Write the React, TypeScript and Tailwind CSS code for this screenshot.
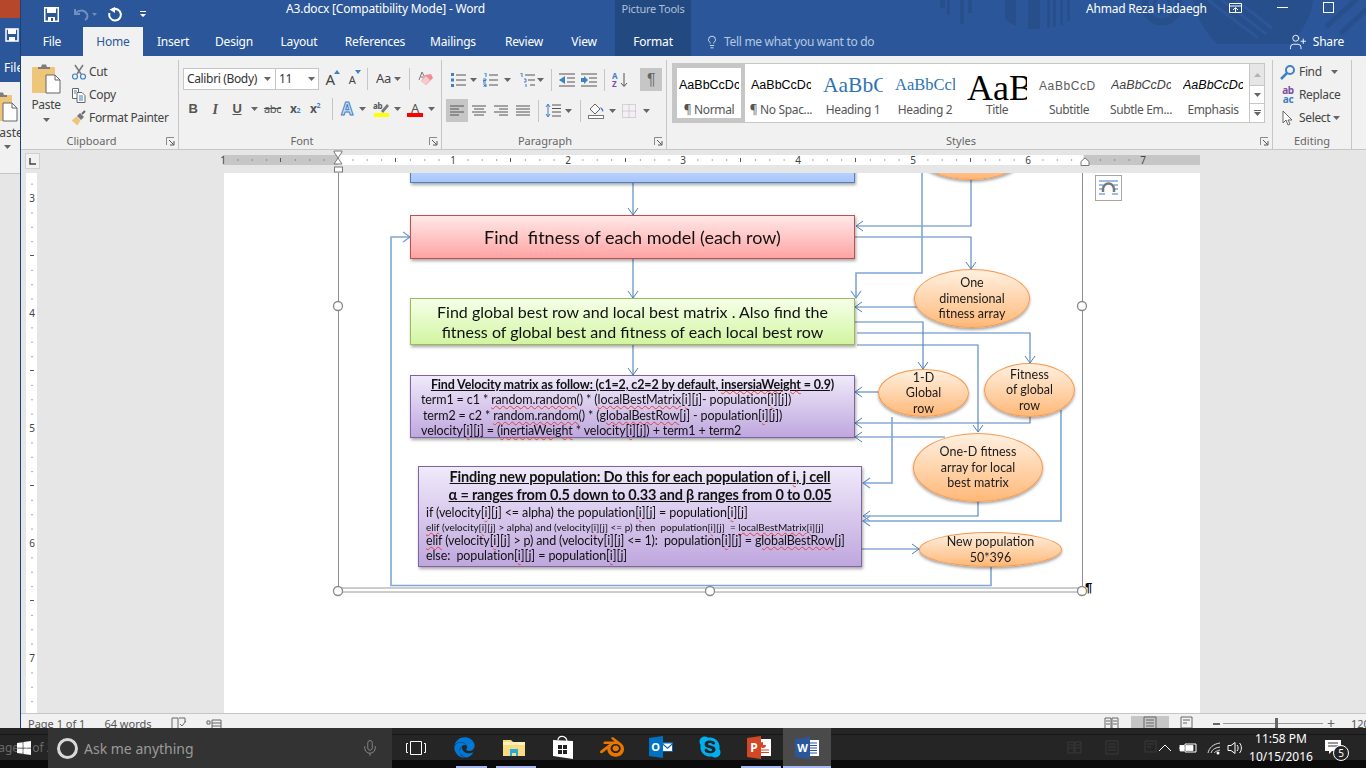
import React from "react";
import { FaEdge, FaWindows, FaSkype } from "react-icons/fa";
import { SiBlender } from "react-icons/si";
import { Lightbulb, UserPlus, Mic } from "lucide-react";

const LB = "#3f7fc4";

function Caret({ className = "" }: { className?: string }) {
  return (
    <svg width="7" height="4" viewBox="0 0 7 4" className={className}>
      <path d="M0 0h7L3.500 4z" fill="#666" />
    </svg>
  );
}

function Cell({ className, children }: { className: string; children?: React.ReactNode }) {
  return <span className={"flex items-center justify-center shrink-0 h-full " + className}>{children}</span>;
}

function Sep({ className = "" }: { className?: string }) {
  return <span className={"block w-px h-[22px] bg-[#c6c6c6] shrink-0 " + className} />;
}

function Launcher() {
  return (
    <svg width="9" height="9" viewBox="0 0 9 9" className="absolute right-[3px] bottom-[3px]">
      <path d="M0.500 8V0.500H8" fill="none" stroke="#8a8a8a" />
      <path d="M3 3l4.500 4.500M8 4v4H4" fill="none" stroke="#555" />
    </svg>
  );
}

function Group({ label, className, labelClass = "pr-[15px]", launcher = true, children }: { label: string; className: string; labelClass?: string; launcher?: boolean; children: React.ReactNode }) {
  return (
    <div className={"relative shrink-0 h-[89px] my-[4px] border-r border-[#c6c6c6] flex flex-col " + className}>
      <div className="h-[73px] shrink-0">{children}</div>
      <div className={"flex-1 flex items-center justify-center text-[11px] tracking-normal leading-none text-[#666] pb-[1px] " + labelClass}>{label}</div>
      {launcher && <Launcher />}
    </div>
  );
}

function Lines({ d }: { d: string }) {
  return (
    <svg width="16" height="14" viewBox="0 0 16 14">
      <path d={d} stroke="#555" fill="none" />
    </svg>
  );
}

function Paste() {
  return (
    <svg width="30" height="30" viewBox="0 0 30 30">
      <rect x="1" y="3" width="23" height="26" rx="1" fill="#eec67a" />
      <path d="M7 5V3h3l1-2.500h4l1 2.500h3v2z" fill="#7d7d7d" />
      <path d="M15 11h9l5 5v13H15z" fill="#fff" stroke="#666" />
      <path d="M24 11v5h5" fill="none" stroke="#666" />
    </svg>
  );
}

function Ribbon() {
  return (
    <div className="h-[94px] shrink-0 bg-[#f1f1f1] border-b border-[#c6c6c6] flex text-[#444] text-[12px] tracking-[-0.35px]">
      <Group label="Clipboard" className="w-[158px]" labelClass="pr-[16px]">
        <div className="flex pl-[5px] h-full">
          <div className="w-[40px] flex flex-col items-center pt-[4px]">
            <Paste />
            <span className="mt-[3px] leading-[16px]">Paste</span>
            <Caret className="mt-[5px]" />
          </div>
          <div className="ml-[5px] flex flex-col">
            <div className="flex items-center h-[23px]">
              <svg width="16" height="16" viewBox="0 0 16 16" className="mr-[2px]">
                <path d="M4 1l6 9M12 1L6 10" stroke="#777" strokeWidth="1.500" fill="none" />
                <circle cx="4" cy="12.500" r="2.500" fill="none" stroke="#3f7fc4" strokeWidth="1.200" />
                <circle cx="12" cy="12.500" r="2.500" fill="none" stroke="#3f7fc4" strokeWidth="1.200" />
              </svg>
              Cut
            </div>
            <div className="flex items-center h-[23px]">
              <svg width="16" height="16" viewBox="0 0 16 16" className="mr-[2px]">
                <path d="M1.500 1.500h6v10h-6z" fill="#fff" stroke="#666" />
                <path d="M6 5.500h5l3 3v7H6z" fill="#fff" stroke="#666" />
                <path d="M8 9h4M8 11h4M8 13h4M3 4h3M3 6h2" stroke="#3f7fc4" />
              </svg>
              Copy
            </div>
            <div className="flex items-center h-[23px] whitespace-nowrap">
              <svg width="16" height="16" viewBox="0 0 16 16" className="mr-[2px]">
                <path d="M9 3l4 4-3 3-4-4z" fill="#777" />
                <path d="M5.500 6.500l4 4-3 5-6-5z" fill="#eec67a" />
                <path d="M11 4l3-3" stroke="#666" strokeWidth="2" />
              </svg>
              Format Painter
            </div>
          </div>
        </div>
      </Group>

      <Group label="Font" className="w-[263px]" labelClass="pr-[16px]">
        <div className="flex h-[22px] mt-[8px] pl-[4px] items-center">
          <div className="w-[93px] shrink-0 h-full bg-white border border-[#c6c6c6] flex items-center justify-between pl-[3px] pr-[4px] text-[#333] whitespace-nowrap">
            Calibri (Body)
            <Caret />
          </div>
          <div className="w-[43px] shrink-0 h-full bg-white border border-l-0 border-[#c6c6c6] flex items-center justify-between px-[3px] text-[#333]">
            11
            <Caret />
          </div>
          <Cell className="w-[22px] text-[15px] leading-none relative">
            A
            <svg width="6" height="4" viewBox="0 0 6 4" className="absolute right-[1px] top-[2px]"><path d="M0 4l3-4 3 4z" fill={LB} /></svg>
          </Cell>
          <Cell className="w-[22px] text-[11px] leading-none relative">
            A
            <svg width="6" height="4" viewBox="0 0 6 4" className="absolute right-[2px] top-[2px]"><path d="M0 0l3 4 3-4z" fill={LB} /></svg>
          </Cell>
          <Sep className="ml-[4px]" />
          <Cell className="w-[41px] text-[13px] gap-[3px]">Aa<Caret /></Cell>
          <Sep />
          <Cell className="w-[31px]">
            <svg width="16" height="16" viewBox="0 0 16 16">
              <path d="M7 4l6-1 2 4-7 7-5-4z" fill="#ef8d96" />
              <path d="M3 10l5-5 4 4-4 5z" fill="#f6c9cd" />
              <path d="M1 9l3-8 2 4M2.500 6h3" fill="none" stroke="#777" />
            </svg>
          </Cell>
        </div>
        <div className="flex h-[22px] mt-[8px] pl-[3px] items-center font-bold text-[#555]">
          <Cell className="w-[22px] [font-family:Liberation_Sans,sans-serif] text-[13px]">B</Cell>
          <Cell className="w-[22px] [font-family:Liberation_Serif,serif] italic text-[14px]">I</Cell>
          <Cell className="w-[22px] underline text-[13px] [font-family:Liberation_Sans,sans-serif]">U</Cell>
          <Cell className="w-[12px]"><Caret /></Cell>
          <Cell className="w-[23px] ml-[1px] font-normal line-through text-[11px]">abc</Cell>
          <Cell className="w-[22px] text-[12px]">x<sub className="text-[7px] text-[#3f7fc4] leading-none">2</sub></Cell>
          <Cell className="w-[18px] text-[12px]">x<sup className="text-[7px] text-[#3f7fc4] leading-none">2</sup></Cell>
          <Sep className="ml-[8px]" />
          <Cell className="w-[22px] ml-[3px] text-[17px] font-bold text-[#cfe2f6] [-webkit-text-stroke:1px_#3f7fc4]">A</Cell>
          <Cell className="w-[8px]"><Caret /></Cell>
          <Cell className="w-[22px] ml-[4px]">
            <svg width="17" height="16" viewBox="0 0 17 16">
              <text x="0" y="8" fontSize="8" fill="#555" fontFamily="Noto Sans">ab</text>
              <path d="M8 10l6-7 2 2-6 7z" fill="#777" />
              <rect x="1" y="12" width="15" height="4" fill="#ffff00" />
            </svg>
          </Cell>
          <Cell className="w-[8px] ml-[1px]"><Caret /></Cell>
          <Cell className="w-[22px] ml-[3px]">
            <svg width="16" height="16" viewBox="0 0 16 16">
              <text x="8" y="11.500" fontSize="13" fontWeight="400" fill="#555" textAnchor="middle" fontFamily="Noto Sans">A</text>
              <rect x="0" y="12" width="16" height="4" fill="#ff0000" />
            </svg>
          </Cell>
          <Cell className="w-[8px] ml-[1px]"><Caret /></Cell>
        </div>
      </Group>

      <Group label="Paragraph" className="w-[225px]" labelClass="pr-[18px]">
        <div className="flex h-[23px] mt-[8px] pl-[6px] items-center">
          <Cell className="w-[21px]">
            <svg width="15" height="14" viewBox="0 0 15 14"><path d="M5 2h10M5 7h10M5 12h10" stroke="#555" /><path d="M0 0h3v3H0zM0 5.500h3v3H0zM0 11h3v3H0z" fill={LB} /></svg>
          </Cell>
          <Cell className="w-[8px]"><Caret /></Cell>
          <Cell className="w-[22px] ml-[2px]">
            <svg width="15" height="14" viewBox="0 0 15 14"><path d="M6 2h9M6 7h9M6 12h9" stroke="#555" /><path d="M1 0h2v4M0 6h3v1.500H0V9h3M0 11h3v3H0M1 12.500h2" stroke={LB} fill="none" /></svg>
          </Cell>
          <Cell className="w-[8px] ml-[2px]"><Caret /></Cell>
          <Cell className="w-[22px] ml-[5px]">
            <svg width="16" height="14" viewBox="0 0 16 14"><path d="M6 2h10M9 7h7M11 12h5" stroke="#555" /><path d="M1 0h2v4M5 6h2v3H5M7 11v3" stroke={LB} fill="none" /></svg>
          </Cell>
          <Cell className="w-[8px] ml-[-2px]"><Caret /></Cell>
          <Sep className="ml-[7px]" />
          <Cell className="w-[22px] ml-[4px]">
            <svg width="16" height="14" viewBox="0 0 16 14"><path d="M0 1h16M8 5h8M8 9h8M0 13h16" stroke="#555" /><path d="M6 3v8L0 7z" fill={LB} /></svg>
          </Cell>
          <Cell className="w-[22px]">
            <svg width="16" height="14" viewBox="0 0 16 14"><path d="M0 1h16M8 5h8M8 9h8M0 13h16" stroke="#555" /><path d="M0 5h3V3l4 4-4 4V9H0z" fill={LB} /></svg>
          </Cell>
          <Sep className="ml-[4px]" />
          <Cell className="w-[22px] ml-[4px]">
            <svg width="16" height="16" viewBox="0 0 16 16">
              <text x="0" y="7" fontSize="8" fontWeight="bold" fill={LB} fontFamily="Noto Sans">A</text>
              <text x="0" y="15" fontSize="8" fontWeight="bold" fill="#7a4fa3" fontFamily="Noto Sans">Z</text>
              <path d="M12 1v13M9 11l3 3.500 3-3.500" stroke="#555" fill="none" />
            </svg>
          </Cell>
          <Cell className="w-[22px] ml-[9px] bg-[#c6c6c6] text-[#666] text-[16px] [font-family:Liberation_Sans,sans-serif]">¶</Cell>
        </div>
        <div className="flex h-[23px] mt-[8px] pl-[4px] items-center">
          <Cell className="w-[22px] bg-[#c6c6c6]"><Lines d="M1 2h14M1 5h9M1 8h14M1 11h9" /></Cell>
          <Cell className="w-[22px]"><Lines d="M1 2h14M3 5h10M1 8h14M3 11h10" /></Cell>
          <Cell className="w-[22px]"><Lines d="M1 2h14M6 5h9M1 8h14M6 11h9" /></Cell>
          <Cell className="w-[22px]"><Lines d="M1 2h14M1 5h14M1 8h14M1 11h14" /></Cell>
          <Sep className="ml-[4px]" />
          <Cell className="w-[22px] ml-[3px]">
            <svg width="16" height="15" viewBox="0 0 16 15"><path d="M7 2h9M7 5.500h9M7 9h9M7 13h9" stroke="#555" /><path d="M3 2v11M1 4l2-3 2 3M1 11l2 3 2-3" stroke={LB} fill="none" /></svg>
          </Cell>
          <Cell className="w-[8px]"><Caret /></Cell>
          <Sep className="ml-[8px]" />
          <Cell className="w-[22px] ml-[4px]">
            <svg width="17" height="16" viewBox="0 0 17 16"><path d="M2 6l5-5 5 5-5 5z" fill="#fff" stroke="#666" /><path d="M12 4c3 1 4 3 3 5-1-1-2-3-3-5z" fill={LB} /><rect x="0.500" y="12.500" width="15" height="3" fill="#fff" stroke="#777" /></svg>
          </Cell>
          <Cell className="w-[8px] ml-[1px]"><Caret /></Cell>
          <Cell className="w-[22px] ml-[2px]">
            <svg width="14" height="14" viewBox="0 0 14 14"><path d="M.500.500h13v13H.500zM7 .500v13M.500 7h13" fill="none" stroke="#c3a9c9" strokeDasharray="1 1" /></svg>
          </Cell>
          <Cell className="w-[8px] ml-[2px]"><Caret /></Cell>
        </div>
      </Group>

      <Group label="Styles" className="w-[606px]" labelClass="pr-[17px]">
        <div className="ml-[5px] mt-[3px] w-[593px] h-[60px] bg-white border border-[#c6c6c6] flex">
          <Style sel label="¶ Normal" cls="[font-family:Liberation_Sans,sans-serif] text-[12.500px] tracking-normal text-black">AaBbCcDc</Style>
          <Style label="¶ No Spac..." cls="[font-family:Liberation_Sans,sans-serif] text-[12.500px] tracking-normal text-black">AaBbCcDc</Style>
          <Style label="Heading 1" cls="[font-family:Liberation_Serif,serif] text-[21.500px] tracking-normal text-[#2e74b5]">AaBbC</Style>
          <Style label="Heading 2" cls="[font-family:Liberation_Serif,serif] text-[16.500px] tracking-normal text-[#2e74b5]">AaBbCcl</Style>
          <Style label="Title" cls="[font-family:Liberation_Serif,serif] text-[36px] leading-[26px] pt-[4px] tracking-normal text-black">AaB</Style>
          <Style label="Subtitle" cls="[font-family:Liberation_Sans,sans-serif] text-[12px] tracking-[0.6px] text-[#5a5a5a]">AaBbCcD</Style>
          <Style label="Subtle Em..." cls="[font-family:Liberation_Sans,sans-serif] italic text-[12.500px] tracking-normal text-[#404040]">AaBbCcDc</Style>
          <Style label="Emphasis" cls="[font-family:Liberation_Sans,sans-serif] italic text-[12.500px] tracking-normal text-black">AaBbCcDc</Style>
          <div className="w-[15px] border-l border-[#c6c6c6] flex flex-col">
            <div className="h-[21px] bg-[#e6e6e6] flex items-center justify-center"><Caret className="rotate-180 opacity-40" /></div>
            <div className="h-[19px] border-y border-[#c6c6c6] flex items-center justify-center"><Caret /></div>
            <div className="flex-1 flex flex-col items-center justify-center gap-[1px]"><span className="w-[7px] h-px bg-[#666]" /><Caret /></div>
          </div>
        </div>
      </Group>

      <Group label="Editing" className="w-[79px]" labelClass="pr-0" launcher={false}>
        <div className="flex flex-col pl-[6px]">
          <div className="flex items-center h-[23px]">
            <svg width="16" height="16" viewBox="0 0 16 16" className="mx-[1px]"><circle cx="10" cy="6" r="4" fill="none" stroke={LB} strokeWidth="2" /><path d="M7 9l-6 6" stroke={LB} strokeWidth="2.500" /></svg>
            <span className="ml-[2px]">Find</span>
            <Caret className="ml-[9px]" />
          </div>
          <div className="flex items-center h-[23px]">
            <span className="w-[18px] text-[10px] leading-[9px] font-bold text-center"><span className="text-[#7a4fa3]">ab</span><br /><span className="text-[#3f7fc4]">ac</span></span>
            <span className="ml-[2px]">Replace</span>
          </div>
          <div className="flex items-center h-[23px]">
            <svg width="12" height="16" viewBox="0 0 12 16" className="mx-[3px]"><path d="M1 1v12l3-3 2 5 2-1-2-4h4z" fill="#fff" stroke="#666" /></svg>
            <span className="ml-[2px]">Select</span>
            <Caret className="ml-[3px]" />
          </div>
        </div>
      </Group>
    </div>
  );
}

function Style({ label, cls, sel, children }: { label: string; cls: string; sel?: boolean; children: string }) {
  return (
    <div className={"w-[72px] h-full shrink-0 flex flex-col items-center border-4 " + (sel ? "border-[#c6c6c6]" : "border-transparent")}>
      <div className={"w-[60px] h-[35px] overflow-hidden whitespace-nowrap flex items-center justify-start shrink-0 " + cls}>{children}</div>
      <div className="text-[12px] leading-[14px] text-[#555] whitespace-nowrap">{label}</div>
    </div>
  );
}

function HRuler() {
  const ticks: React.ReactNode[] = [];
  for (let i = -8; i <= 56; i++) {
    const x = 115 + i * 14.375;
    if (i % 8 === 0) continue;
    ticks.push(i % 4 === 0 ? <path key={i} d={`M${x} 3v4`} stroke="#555" /> : <rect key={i} x={x} y={4.500} width="1" height="1" fill="#555" />);
  }
  const nums = [[0, "1"], [230, "1"], [345, "2"], [460, "3"], [575, "4"], [690, "5"], [805, "6"], [920, "7"]] as [number, string][];
  return (
    <svg width="977" height="23" viewBox="0 -5 977 23" className="overflow-visible">
      <rect x="0" y="0" width="115" height="10" fill="#c6c6c6" />
      <rect x="115" y="0" width="745" height="10" fill="#fff" />
      <rect x="861" y="0" width="116" height="10" fill="#c6c6c6" />
      {ticks}
      {nums.map(([x, t], i) => (
        <text key={i} x={x} y="9" fontSize="10" textAnchor="middle" fill="#444" fontFamily="Noto Sans">{t}</text>
      ))}
      <path d="M111 -4h8v1l-4 6-4-6zM111 9l4-6 4 6z" fill="#fff" stroke="#777" />
      <rect x="111.500" y="12" width="8" height="5" fill="#fff" stroke="#777" />
      <path d="M858 10.500v-4l4-3.500 4 3.500v4z" fill="#fff" stroke="#777" />
    </svg>
  );
}

function VRuler() {
  const ticks: React.ReactNode[] = [];
  for (let i = -2; i < 40; i++) {
    const y = 25 + i * 14.375;
    if (i % 8 === 0) continue;
    ticks.push(i % 4 === 0 ? <path key={i} d={`M4 ${y}h4`} stroke="#555" /> : <rect key={i} x="5.500" y={y} width="1" height="1" fill="#555" />);
  }
  return (
    <svg width="12" height="540" viewBox="0 0 12 540">
      {ticks}
      {["3", "4", "5", "6", "7"].map((t, i) => (
        <text key={t} x="6" y={25 + i * 115 + 4} fontSize="10" textAnchor="middle" fill="#444" fontFamily="Noto Sans">{t}</text>
      ))}
    </svg>
  );
}

function Sq({ children }: { children: React.ReactNode }) {
  return <span className="underline decoration-wavy decoration-[#e04040] decoration-1 underline-offset-1">{children}</span>;
}

const oval = "absolute rounded-[50%] border border-[#f79646] bg-gradient-to-b from-[#fff0e0] to-[#ffb877] shadow-[0_2px_3px_rgba(0,0,0,0.35)] flex flex-col items-center justify-center text-center text-[12.500px] leading-[15.500px] text-[#1a1a1a] blur-[0.25px] [font-family:Lato,sans-serif]";
const box = "absolute border shadow-[1px_2px_3px_rgba(0,0,0,0.35)] text-[#111] [font-family:Lato,sans-serif] blur-[0.25px]";

type Ln = { p: string; light?: boolean };
const lines: Ln[] = [
  { p: "633,183 633,215" },
  { p: "633,259 633,298" },
  { p: "633,345 633,375" },
  { p: "991,567 991,585.500 391,585.500 391,237 410,237", light: true },
  { p: "971,176 971,226 856,226" },
  { p: "855,237 971,237 971,269" },
  { p: "922,173 922,273 856,273 856,298", light: true },
  { p: "921,307 855,307" },
  { p: "855,322 923,322 923,369" },
  { p: "857,333 1030,333 1030,363" },
  { p: "857,345 978,345 978,432" },
  { p: "878,392 855,392" },
  { p: "1030,417 1030,423 855,423" },
  { p: "945,437 855,437" },
  { p: "892,417 892,483 863,483", light: true },
  { p: "978,502 978,516 863,516" },
  { p: "1061,410 1061,521 863,521", light: true },
  { p: "862,549 919,549" },
];

function Diagram() {
  return (
    <div className="relative w-[976px] h-[540px] bg-white overflow-hidden shrink-0">
      <svg width="976" height="540" viewBox="224 173 976 540" className="absolute left-0 top-0">
        <defs>
          <marker id="ah" markerWidth="10" markerHeight="12" refX="8" refY="6" orient="auto" markerUnits="userSpaceOnUse">
            <path d="M1 1L8 6L1 11" fill="none" stroke="#4f81bd" strokeWidth="1" />
          </marker>
          <marker id="al" markerWidth="10" markerHeight="12" refX="8" refY="6" orient="auto" markerUnits="userSpaceOnUse">
            <path d="M1 1L8 6L1 11" fill="none" stroke="#6f9ad0" strokeWidth="1.200" />
          </marker>
        </defs>
        <path d="M338.500 173V588M1082.500 173V588" stroke="#8e8e8e" strokeWidth="1" fill="none" />
        <path d="M338 588H1083M338 592H1083" stroke="#9a9a9a" strokeWidth="1" fill="none" />
        {lines.map((l, i) => (
          <polyline
            key={i}
            points={l.p}
            fill="none"
            stroke={l.light ? "#7fa6d6" : "#4f81bd"}
            strokeWidth={l.light ? 1.6 : 1.1}
            markerEnd={l.light ? "url(#al)" : "url(#ah)"}
          />
        ))}
      </svg>

      <div className={box + " left-[186px] top-[-20px] w-[445px] h-[30px] border-[#4f81bd] bg-gradient-to-b from-[#dbe7fb] to-[#a7c6fa]"} />
      <div className={box + " left-[186px] top-[42px] w-[445px] h-[44px] border-[#c0504d] bg-gradient-to-b from-[#ffe8e8] to-[#ffa3a3] flex items-center justify-center text-[18px]"}>
        <span className="whitespace-pre">Find  fitness of each model (each row)</span>
      </div>
      <div className={box + " left-[186px] top-[125px] w-[445px] h-[47px] border-[#9bbb59] bg-gradient-to-b from-[#f6ffe8] to-[#d2f5a0] flex flex-col items-center justify-center text-[16px] leading-[20px]"}>
        <span className="whitespace-pre">Find global best row and local best matrix . Also find the</span>
        <span className="whitespace-pre">fitness of global best and fitness of each local best row</span>
      </div>
      <div className={box + " left-[186px] top-[202px] w-[445px] h-[63px] border-[#8064a2] bg-gradient-to-b from-[#f0eafa] to-[#bfa7de] text-[12.500px] leading-[15.300px] tracking-[-0.12px] pt-[1px] whitespace-pre"}>
        <div className="text-center font-bold underline tracking-[-0.15px]">Find Velocity matrix as follow: (c1=2, c2=2 by default, <Sq>insersiaWeight</Sq> = 0.9)</div>
        <div className="pl-[10px]">term1 = c1 * <Sq>random.random</Sq>() * (<Sq>localBestMatrix</Sq>[<Sq>i</Sq>][j]- population[<Sq>i</Sq>][j])</div>
        <div className="pl-[12px]">term2 = c2 * <Sq>random.random</Sq>() * (<Sq>globalBestRow</Sq>[j] - population[<Sq>i</Sq>][j])</div>
        <div className="pl-[10px]">velocity[<Sq>i</Sq>][j] = (<Sq>inertiaWeight</Sq> * velocity[<Sq>i</Sq>][j]) + term1 + term2</div>
      </div>
      <div className={box + " left-[194px] top-[293px] w-[444px] h-[101px] border-[#8064a2] bg-gradient-to-b from-[#f0eafa] to-[#bfa7de] whitespace-pre pt-[1px]"}>
        <div className="text-center font-bold underline text-[14.500px] tracking-[-0.2px] leading-[18px]">Finding new population: Do this for each population of <Sq>i</Sq>, j cell</div>
        <div className="text-center font-bold underline text-[14.500px] tracking-[-0.2px] leading-[18px]">α = ranges from 0.5 down to 0.33 and β ranges from 0 to 0.05</div>
        <div className="pl-[7px] text-[12.500px] tracking-[-0.12px] leading-[15.500px] mt-[1px]">if (velocity[<Sq>i</Sq>][j] &lt;= alpha) the population[<Sq>i</Sq>][j] = population[<Sq>i</Sq>][j]</div>
        <div className="pl-[7px] text-[10px] leading-[12px]"><Sq>elif</Sq> (velocity[<Sq>i</Sq>][j] &gt; alpha) and (velocity[<Sq>i</Sq>][j] &lt;= p) then  population[<Sq>i</Sq>][j]  = <Sq>localBestMatrix</Sq>[<Sq>i</Sq>][j]</div>
        <div className="pl-[7px] text-[12.500px] tracking-[-0.15px] leading-[15.500px]"><Sq>elif</Sq> (velocity[<Sq>i</Sq>][j] &gt; p) and (velocity[<Sq>i</Sq>][j] &lt;= 1):  population[<Sq>i</Sq>][j] = <Sq>globalBestRow</Sq>[j]</div>
        <div className="pl-[7px] text-[12.500px] tracking-[-0.1px] leading-[15.500px]">else:  population[<Sq>i</Sq>][j] = population[<Sq>i</Sq>][j]</div>
      </div>

      <div className={oval + " left-[691px] top-[-50px] w-[112px] h-[57px]"} />
      <div className={oval + " left-[690px] top-[96px] w-[116px] h-[59px]"}>One<br />dimensional<br />fitness array</div>
      <div className={oval + " left-[654px] top-[196px] w-[91px] h-[48px]"}>1-D<br />Global<br />row</div>
      <div className={oval + " left-[760px] top-[190px] w-[91px] h-[54px]"}>Fitness<br />of global<br />row</div>
      <div className={oval + " left-[689px] top-[260px] w-[130px] h-[69px]"}>One-D fitness<br />array for local<br />best matrix</div>
      <div className={oval + " left-[695px] top-[359px] w-[143px] h-[35px]"}>New population<br />50*396</div>

      <svg width="976" height="540" viewBox="224 173 976 540" className="absolute left-0 top-0 pointer-events-none">
        {[[338, 306], [1082, 306], [338, 591], [710, 591], [1082, 591]].map(([x, y]) => (
          <circle key={x + "-" + y} cx={x} cy={y} r="4.500" fill="#fff" stroke="#888" strokeWidth="1.300" />
        ))}
      </svg>
      <span className="absolute left-[861px] top-[406px] [font-family:Liberation_Sans,sans-serif] text-[13px] leading-[18px] font-bold text-black">¶</span>
      <div className="absolute left-[871px] top-[2px] w-[27px] h-[26px] border border-[#a6a6a6] bg-white flex items-center justify-center">
        <svg width="21" height="18" viewBox="0 0 21 18">
          <path d="M1 2h19M1 15h6M14 15h6M1 6h4M16 6h4M1 10h3M17 10h3" stroke="#3f7fc4" />
          <path d="M5 13V10a5.500 5.500 0 0 1 11 0v3" fill="none" stroke="#777" strokeWidth="2.500" />
        </svg>
      </div>
    </div>
  );
}

function Tab({ children, className }: { children: React.ReactNode; className: string }) {
  return <div className={"flex items-center justify-center h-full shrink-0 whitespace-nowrap " + className}>{children}</div>;
}

function StatusIcon({ d, size = 16 }: { d: string; size?: number }) {
  return (
    <svg width={size} height={size} viewBox="0 0 16 16"><path d={d} fill="none" stroke="#666" /></svg>
  );
}

function AppCell({ children }: { children: React.ReactNode }) {
  return <div className="relative w-[49px] shrink-0 flex items-center justify-center pb-[2px]">{children}</div>;
}

function Taskbar() {
  return (
    <div className="relative h-[40px] shrink-0 bg-[#252525] flex items-stretch overflow-hidden">
      <div className="absolute left-0 right-0 top-[6px] h-px bg-[#171717]" />
      <div className="absolute left-0 right-0 bottom-0 h-[8px] bg-[#0b0b0b]" />
      <span className="absolute left-[-9px] top-[11px] text-[12px] text-[#6a6a6a] whitespace-pre">Page 2 of 2</span>
      <Cell className="relative w-[48px]"><FaWindows className="text-white" size={16} /></Cell>
      <div className="relative w-[344px] bg-[#333333] flex items-center text-[#9a9a9a] text-[14px]">
        <span className="ml-[9px] w-[21px] h-[21px] rounded-full border-[3px] border-[#d8d8d8]" />
        <span className="ml-[6px]">Ask me anything</span>
        <Mic className="ml-auto mr-[13px] text-[#8a8a8a]" size={18} strokeWidth={1.2} />
      </div>
      <Cell className="relative w-[48px]">
        <svg width="20" height="14" viewBox="0 0 20 14"><path d="M4.500 .500h11v13h-11zM2 2.500H.500v9H2M18 2.500h1.500v9H18" fill="none" stroke="#fff" /></svg>
      </Cell>
      <AppCell><FaEdge className="text-[#0078d7]" size={21} /></AppCell>
      <AppCell>
        <svg width="22" height="18" viewBox="0 0 22 18"><path d="M0 2h8l2 2h12v14H0z" fill="#f7dc84" /><path d="M0 4h22v3H0z" fill="#fff1b5" /><path d="M7 18v-7h8v7h-2v-3H9v3z" fill="#29a8e0" /></svg>
      </AppCell>
      <AppCell>
        <svg width="21" height="24" viewBox="0 0 21 24"><path d="M1 5l20 1v18L1 21z" fill="#fff" /><path d="M6 5c0-5 8-5 9 1" fill="none" stroke="#fff" strokeWidth="1.200" /><path d="M6 10h4v4H6zM11 10h4v4h-4zM6 15h4v4H6zM11 15h4v4h-4z" fill="#222" /></svg>
      </AppCell>
      <AppCell><SiBlender className="text-[#ea7600]" size={24} /></AppCell>
      <AppCell>
        <svg width="24" height="22" viewBox="0 0 24 22">
          <path d="M13 6h11v10H13z" fill="#0a5fa8" /><path d="M14 7.500h9l-4.500 4z" fill="#fff" /><path d="M14 9l4.500 4L23 9v6h-9z" fill="#fff" />
          <path d="M0 2l14-2v22L0 20z" fill="#0072c6" />
          <text x="6.500" y="15" fontSize="11" fontWeight="bold" textAnchor="middle" fill="#fff" fontFamily="Noto Sans">O</text>
        </svg>
      </AppCell>
      <AppCell><FaSkype className="text-[#00aff0]" size={24} /></AppCell>
      <AppCell>
        <svg width="24" height="23" viewBox="0 0 24 23">
          <path d="M12 3h12v17H12z" fill="#fff" /><path d="M16 6a3 3 0 1 0 3 3h-3z" fill="#d24726" /><path d="M14 14h8M14 16.500h8" stroke="#d24726" />
          <path d="M0 2l14-2v23L0 21z" fill="#d24726" />
          <text x="7" y="16" fontSize="12" fontWeight="bold" textAnchor="middle" fill="#fff" fontFamily="Noto Sans">P</text>
        </svg>
      </AppCell>
      <div className="relative w-[48px] shrink-0 bg-[#4a4a4a] flex items-center justify-center">
        <svg width="24" height="22" viewBox="0 0 24 22">
          <path d="M12 3h12v16H12z" fill="#fff" /><path d="M15 6h7M15 8.500h7M15 11h7M15 13.500h7M15 16h7" stroke="#2b579a" />
          <path d="M0 2l15-2v22L0 20z" fill="#2b579a" />
          <text x="7.500" y="15" fontSize="11" fontWeight="bold" textAnchor="middle" fill="#fff" fontFamily="Noto Sans">W</text>
        </svg>
        <span className="absolute left-0 right-0 bottom-0 h-[2px] bg-[#a8b8f0]" />
      </div>
      <span className="absolute left-[456px] bottom-0 h-[2px] w-[31px] bg-[#a8b8f0]" />
      <span className="absolute left-[496px] bottom-0 h-[2px] w-[40px] bg-[#a8b8f0]" />
      <span className="absolute left-[741px] bottom-0 h-[2px] w-[40px] bg-[#a8b8f0]" />

      {/* the status bar of the window behind shows faintly through the taskbar */}
      <span className="absolute left-[1067px] top-[12px] opacity-30"><StatusIcon d="M1 2h6v11H1zM8 2h6v11H8zM2 5h4M2 8h4M9 5h4M9 8h4" /></span>
      <span className="absolute left-[1104px] top-[12px] opacity-30"><StatusIcon d="M2 1h12v13H2zM4 4h8M4 7h8M4 10h8" /></span>
      <span className="absolute left-[1143px] top-[12px] opacity-30"><StatusIcon d="M2 1h11v11H2zM4 4h7M4 7h4" /></span>

      <div className="relative ml-auto flex items-center text-white">
        <svg width="14" height="8" viewBox="0 0 14 8" className="mr-[7px]"><path d="M1 7l6-6 6 6" fill="none" stroke="#fff" /></svg>
        <svg width="18" height="10" viewBox="0 0 18 10" className="mr-[10px]"><path d="M6 1h11v8H6z" fill="none" stroke="#fff" /><path d="M7 2.500h7v5H7zM0 5h6M1 2v6h4V2" fill="#fff" stroke="#fff" strokeWidth="0.800" /></svg>
        <svg width="14" height="13" viewBox="0 0 14 13" className="mr-[6px]"><path d="M1 11C2 6 6 2 13 1M4 11c1-3 3-5 9-6M7 11c1-1 2-2 6-3" fill="none" stroke="#ddd" strokeWidth="1" /><circle cx="11" cy="11" r="1.500" fill="#fff" /></svg>
        <svg width="16" height="14" viewBox="0 0 16 14" className="mr-[5px]"><path d="M1 4.500h3l4-3v11l-4-3H1zM10 4c1.500 1.500 1.500 4.500 0 6M12.500 2c2.500 2.500 2.500 7.500 0 10" fill="none" stroke="#fff" /></svg>
        <div className="w-[66px] mr-[11px] flex flex-col items-center text-[12px] leading-[18px] whitespace-nowrap">
          <span>11:58 PM</span>
          <span>10/15/2016</span>
        </div>
        <div className="relative w-[41px] h-full">
          <svg width="16" height="14" viewBox="0 0 16 14" className="absolute left-0 top-[12px]"><path d="M0 0h16v11H7l-3 3v-3H0z" fill="#fff" /><path d="M3 3h10M3 6h10" stroke="#333" /></svg>
          <span className="absolute left-[8px] top-[17px] w-[16px] h-[16px] rounded-full border border-white bg-[#252525] text-[10px] leading-[14px] text-center text-white">5</span>
        </div>
      </div>
    </div>
  );
}

export default function App() {
  return (
    <div className="w-[1366px] h-[768px] overflow-hidden flex flex-col [font-family:Noto_Sans,sans-serif] bg-[#e6e6e6]">
      <div className="flex h-[728px] shrink-0">
        {/* window behind */}
        <div className="w-[20px] shrink-0 flex flex-col overflow-hidden bg-[#f1f1f1] text-[#444] text-[12px]">
          <div className="h-[18px] bg-[#b7472a] shrink-0" />
          <div className="h-[64px] bg-[#2b579a] shrink-0 relative text-white">
            <svg width="14" height="14" viewBox="0 0 14 14" className="absolute left-[5px] top-[10px]"><path d="M1 1h12v12H1z" fill="none" stroke="#fff" strokeWidth="1.500" /><path d="M3 1h8v5H3zM4 9h6v4H4z" fill="#fff" /></svg>
            <span className="absolute left-[4px] top-[41px]">File</span>
          </div>
          <div className="h-[92px] relative shrink-0 border-b border-[#c6c6c6]">
            <div className="absolute left-[-12px] top-[10px]"><Paste /></div>
            <span className="absolute left-[-8px] top-[42px] whitespace-pre">Paste</span>
            <Caret className="absolute left-[4px] top-[63px]" />
          </div>
          <div className="flex-1 bg-[#e6e6e6]" />
        </div>
        {/* main window */}
        <div className="flex-1 flex flex-col border-l border-[#1f3f70] min-w-0">
          <div className="relative h-[56px] shrink-0 bg-[#2b579a] text-white text-[12px] tracking-[-0.2px] overflow-hidden">
            <svg width="446" height="56" viewBox="920 0 446 56" className="absolute right-0 top-0">
              <g fill="#264f8c">
                <path d="M940 0h5v8h-5zM947 0h3v15h-3zM960 0h4v24h-4zM968 0h4v13h-4z" />
                <path d="M1005 0h11v26q-6-2-11-7z" />
                <path d="M1028 0h12v29h-12zM1047 0h3v28h-3zM1053 0h3v27h-3zM1060 0h3v25h-3zM1067 0h3v21h-3z" />
                <path d="M1193 0c4 22 18 38 24 44h73c12-12 22-28 23-44z" />
              </g>
              <g fill="none">
                <circle cx="1162" cy="5" r="17" stroke="#264f8c" strokeWidth="7" />
                <circle cx="1162" cy="5" r="8" stroke="#264f8c" strokeWidth="3" />
                <path d="M1208 0l50 38M1222 0l44 34M1236 0l36 28" stroke="#2b579a" strokeWidth="3" />
                <path d="M1326 27l44-40M1340 34l30-28" stroke="#264f8c" strokeWidth="5" />
              </g>
            </svg>
            <div className="relative flex h-[27px] items-start pt-[1px]">
              <Cell className="w-[22px] h-[15px] ml-[19px]">
                <svg width="15" height="15" viewBox="0 0 15 15"><path d="M.750.750h13.500v13.500H.750z" fill="none" stroke="#fff" strokeWidth="1.500" /><path d="M3 1h9v5H3zM4 10h7v4H4z" fill="#fff" /><path d="M7 11h2v3H7z" fill="#2b579a" /></svg>
              </Cell>
              <Cell className="w-[18px] h-[15px] ml-[10px]">
                <svg width="15" height="13" viewBox="0 0 15 13"><path d="M1 1v5h5M1 6c3-4 9-5 12 0 1 3 0 5-2 6" fill="none" stroke="#6f8fc0" strokeWidth="2" /></svg>
              </Cell>
              <Cell className="w-[8px] h-[15px]"><svg width="5" height="3" viewBox="0 0 5 3"><path d="M0 0h5L2.500 3z" fill="#6f8fc0" /></svg></Cell>
              <Cell className="w-[16px] h-[15px] ml-[8px]">
                <svg width="15" height="15" viewBox="0 0 15 15"><path d="M5.500 2.500a5.800 5.800 0 1 1-3 3.500" fill="none" stroke="#fff" strokeWidth="2" /><path d="M8 0v6L2.500 2.500z" fill="#fff" /></svg>
              </Cell>
              <Cell className="w-[8px] h-[15px] ml-[17px]">
                <svg width="6" height="6" viewBox="0 0 6 6"><path d="M0 0h6v1H0zM0 3h6L3 6z" fill="#fff" /></svg>
              </Cell>
              <span className="ml-[139px] whitespace-nowrap leading-[15px]">A3.docx [Compatibility Mode] - Word</span>
              <div className="absolute left-[594px] top-0 w-[76px] h-full bg-[#234a80] flex justify-center pt-[1px] text-[#aebfd8] text-[11px] leading-[15px] whitespace-nowrap">Picture Tools</div>
              <span className="absolute left-[1065px] top-[1px] whitespace-nowrap leading-[15px]">Ahmad Reza Hadaegh</span>
              <svg width="14" height="10" viewBox="0 0 14 10" className="absolute left-[1208px] top-[3px]"><path d="M.500.500h12v9h-12zM.500 3h12M4 7l2.500-2.500L9 7M6.500 5v4" fill="none" stroke="#fff" /></svg>
              <span className="absolute left-[1256px] top-[7px] w-[11px] h-px bg-white" />
              <span className="absolute left-[1302px] top-[2px] w-[11px] h-[11px] border border-white" />
            </div>
            <div className="relative flex h-[29px] items-center">
              <Tab className="w-[62px]">File</Tab>
              <Tab className="w-[60px] bg-[#f1f1f1] text-[#2b579a]">Home</Tab>
              <Tab className="w-[60px]">Insert</Tab>
              <Tab className="w-[62px]">Design</Tab>
              <Tab className="w-[68px]">Layout</Tab>
              <Tab className="w-[84px]">References</Tab>
              <Tab className="w-[72px]">Mailings</Tab>
              <Tab className="w-[70px]">Review</Tab>
              <Tab className="w-[50px]">View</Tab>
              <Tab className="w-[76px] ml-[6px] bg-[#234a80]">Format</Tab>
              <Lightbulb size={14} strokeWidth={1.3} className="ml-[14px] text-white" />
              <span className="ml-[5px] text-[#b6c8e2] whitespace-nowrap tracking-[-0.3px]">Tell me what you want to do</span>
              <UserPlus size={18} strokeWidth={1.2} className="ml-auto mr-[6px]" />
              <span className="mr-[22px]">Share</span>
            </div>
          </div>
          <Ribbon />
          <div className="h-[23px] shrink-0 bg-[#e6e6e6] flex">
            <div className="w-[15px] h-[16px] ml-[4px] mt-[3px] bg-[#f1f1f1] border border-[#d0d0d0] flex items-center justify-center shrink-0">
              <svg width="7" height="7" viewBox="0 0 7 7"><path d="M1 0v6h6" fill="none" stroke="#444" strokeWidth="1.500" /></svg>
            </div>
            <div className="ml-[183px] shrink-0"><HRuler /></div>
          </div>
          <div className="h-[540px] shrink-0 flex bg-[#e6e6e6]">
            <div className="w-[203px] shrink-0 pl-[5px]">
              <div className="w-[11px] h-full bg-white"><VRuler /></div>
            </div>
            <Diagram />
          </div>
          <div className="flex-1 bg-[#f1f1f1] border-t border-[#c6c6c6] flex items-start text-[11px] leading-[19px] text-[#555] min-h-0 overflow-hidden">
            <span className="ml-[7px] whitespace-nowrap">Page 1 of 1</span>
            <span className="ml-[19px] whitespace-nowrap">64 words</span>
            <span className="ml-[19px] mt-[2px]"><StatusIcon d="M1 2h6v11H1zM8 2h6v4M8 13h2M9 8l2 2 4-5" /></span>
            <span className="ml-[19px] mt-[2px]"><StatusIcon d="M1 5h3v3H1zM6 4h9v10H6zM6 7h9M6 10h9" /></span>
            <span className="ml-auto flex items-center">
              <span className="w-[38px] flex justify-center"><StatusIcon d="M1 2h6v11H1zM8 2h6v11H8zM2 5h4M2 8h4M9 5h4M9 8h4" /></span>
              <span className="w-[38px] h-[15px] bg-[#c6c6c6] flex justify-center"><StatusIcon d="M2 1h12v13H2zM4 4h8M4 7h8M4 10h8" /></span>
              <span className="w-[36px] flex justify-center"><StatusIcon d="M2 1h11v11H2zM4 4h7M4 7h4" /></span>
              <span className="ml-[8px] w-[7px] h-[2px] bg-[#666]" />
              <span className="relative ml-[3px] w-[100px] h-px bg-[#999] flex items-center">
                <span className="absolute left-[52px] w-[3px] h-[11px] bg-[#666]" />
              </span>
              <span className="ml-[4px] text-[14px] text-[#666] w-[12px]">+</span>
              <span className="ml-[12px] w-[15px] overflow-hidden whitespace-nowrap">120%</span>
            </span>
          </div>
        </div>
      </div>
      <Taskbar />
    </div>
  );
}
